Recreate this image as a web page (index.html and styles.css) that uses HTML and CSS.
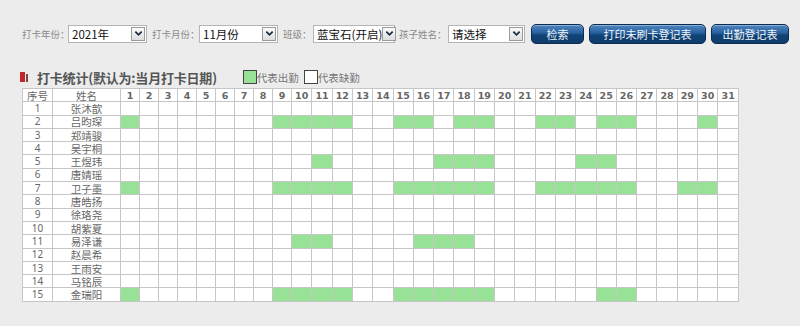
FILE: index.html
```html
<!DOCTYPE html>
<html lang="zh-CN">
<head>
<meta charset="utf-8">
<title>打卡统计</title>
<link rel="stylesheet" href="styles.css">
</head>
<body>
<div class="toolbar">
  <span class="lbl lbl-a">打卡年份：</span>
  <div class="sel sel-a"><span class="sel-text">2021年</span><span class="arrow"><svg viewBox="0 0 10 10" width="9" height="9"><path d="M1.5 3 L5 6.5 L8.5 3" fill="none" stroke="#1a2a44" stroke-width="2"/></svg></span></div>
  <span class="lbl lbl-b">打卡月份：</span>
  <div class="sel sel-a"><span class="sel-text">11月份</span><span class="arrow"><svg viewBox="0 0 10 10" width="9" height="9"><path d="M1.5 3 L5 6.5 L8.5 3" fill="none" stroke="#1a2a44" stroke-width="2"/></svg></span></div>
  <span class="lbl lbl-c">班级：</span>
  <div class="sel sel-c"><span class="sel-text">蓝宝石(开启)</span><span class="arrow"><svg viewBox="0 0 10 10" width="9" height="9"><path d="M1.5 3 L5 6.5 L8.5 3" fill="none" stroke="#1a2a44" stroke-width="2"/></svg></span></div>
  <span class="lbl lbl-d">孩子姓名：</span>
  <div class="sel sel-d"><span class="sel-text">请选择</span><span class="arrow"><svg viewBox="0 0 10 10" width="9" height="9"><path d="M1.5 3 L5 6.5 L8.5 3" fill="none" stroke="#1a2a44" stroke-width="2"/></svg></span></div>
  <button class="btn btn-a">检索</button>
  <button class="btn btn-b">打印未刷卡登记表</button>
  <button class="btn btn-c">出勤登记表</button>
</div>

<div class="title-row">
  <span class="mark"><i class="mark-a"></i><i class="mark-b"></i></span>
  <span class="title">打卡统计(默认为:当月打卡日期)</span>
  <span class="legend"><i class="box box-on"></i>代表出勤<i class="box box-off"></i>代表缺勤</span>
</div>

<table class="grid">
  <colgroup>
    <col class="c-no"><col class="c-name">
    <col class="c-s"><col class="c-s"><col class="c-s"><col class="c-s"><col class="c-s"><col class="c-s"><col class="c-s"><col class="c-s"><col class="c-s">
    <col class="c-d"><col class="c-d"><col class="c-d"><col class="c-d"><col class="c-d"><col class="c-d"><col class="c-d"><col class="c-d"><col class="c-d"><col class="c-d"><col class="c-d"><col class="c-d"><col class="c-d"><col class="c-d"><col class="c-d"><col class="c-d"><col class="c-d"><col class="c-d"><col class="c-d"><col class="c-d"><col class="c-d"><col class="c-d">
  </colgroup>
  <thead>
    <tr><th class="h-cn">序号</th><th class="h-cn">姓名</th><th>1</th><th>2</th><th>3</th><th>4</th><th>5</th><th>6</th><th>7</th><th>8</th><th>9</th><th>10</th><th>11</th><th>12</th><th>13</th><th>14</th><th>15</th><th>16</th><th>17</th><th>18</th><th>19</th><th>20</th><th>21</th><th>22</th><th>23</th><th>24</th><th>25</th><th>26</th><th>27</th><th>28</th><th>29</th><th>30</th><th>31</th></tr>
  </thead>
  <tbody>
    <tr><td class="no">1</td><td class="nm">张沐歆</td><td></td><td></td><td></td><td></td><td></td><td></td><td></td><td></td><td></td><td></td><td></td><td></td><td></td><td></td><td></td><td></td><td></td><td></td><td></td><td></td><td></td><td></td><td></td><td></td><td></td><td></td><td></td><td></td><td></td><td></td><td></td></tr>
    <tr><td class="no">2</td><td class="nm">吕昀琛</td><td class="g"></td><td></td><td></td><td></td><td></td><td></td><td></td><td></td><td class="g"></td><td class="g"></td><td class="g"></td><td class="g"></td><td></td><td></td><td class="g"></td><td class="g"></td><td></td><td class="g"></td><td class="g"></td><td></td><td></td><td class="g"></td><td class="g"></td><td></td><td class="g"></td><td class="g"></td><td></td><td></td><td></td><td class="g"></td><td></td></tr>
    <tr><td class="no">3</td><td class="nm">郑靖骏</td><td></td><td></td><td></td><td></td><td></td><td></td><td></td><td></td><td></td><td></td><td></td><td></td><td></td><td></td><td></td><td></td><td></td><td></td><td></td><td></td><td></td><td></td><td></td><td></td><td></td><td></td><td></td><td></td><td></td><td></td><td></td></tr>
    <tr><td class="no">4</td><td class="nm">吴宇桐</td><td></td><td></td><td></td><td></td><td></td><td></td><td></td><td></td><td></td><td></td><td></td><td></td><td></td><td></td><td></td><td></td><td></td><td></td><td></td><td></td><td></td><td></td><td></td><td></td><td></td><td></td><td></td><td></td><td></td><td></td><td></td></tr>
    <tr><td class="no">5</td><td class="nm">王煜玮</td><td></td><td></td><td></td><td></td><td></td><td></td><td></td><td></td><td></td><td></td><td class="g"></td><td></td><td></td><td></td><td></td><td></td><td class="g"></td><td class="g"></td><td class="g"></td><td></td><td></td><td></td><td></td><td class="g"></td><td class="g"></td><td></td><td></td><td></td><td></td><td></td><td></td></tr>
    <tr><td class="no">6</td><td class="nm">唐婧瑶</td><td></td><td></td><td></td><td></td><td></td><td></td><td></td><td></td><td></td><td></td><td></td><td></td><td></td><td></td><td></td><td></td><td></td><td></td><td></td><td></td><td></td><td></td><td></td><td></td><td></td><td></td><td></td><td></td><td></td><td></td><td></td></tr>
    <tr><td class="no">7</td><td class="nm">卫子墨</td><td class="g"></td><td></td><td></td><td></td><td></td><td></td><td></td><td></td><td class="g"></td><td class="g"></td><td class="g"></td><td class="g"></td><td></td><td></td><td class="g"></td><td class="g"></td><td class="g"></td><td class="g"></td><td class="g"></td><td></td><td></td><td class="g"></td><td class="g"></td><td class="g"></td><td class="g"></td><td class="g"></td><td></td><td></td><td class="g"></td><td class="g"></td><td></td></tr>
    <tr><td class="no">8</td><td class="nm">唐皓扬</td><td></td><td></td><td></td><td></td><td></td><td></td><td></td><td></td><td></td><td></td><td></td><td></td><td></td><td></td><td></td><td></td><td></td><td></td><td></td><td></td><td></td><td></td><td></td><td></td><td></td><td></td><td></td><td></td><td></td><td></td><td></td></tr>
    <tr><td class="no">9</td><td class="nm">徐珞尧</td><td></td><td></td><td></td><td></td><td></td><td></td><td></td><td></td><td></td><td></td><td></td><td></td><td></td><td></td><td></td><td></td><td></td><td></td><td></td><td></td><td></td><td></td><td></td><td></td><td></td><td></td><td></td><td></td><td></td><td></td><td></td></tr>
    <tr><td class="no">10</td><td class="nm">胡紫夏</td><td></td><td></td><td></td><td></td><td></td><td></td><td></td><td></td><td></td><td></td><td></td><td></td><td></td><td></td><td></td><td></td><td></td><td></td><td></td><td></td><td></td><td></td><td></td><td></td><td></td><td></td><td></td><td></td><td></td><td></td><td></td></tr>
    <tr><td class="no">11</td><td class="nm">易泽谦</td><td></td><td></td><td></td><td></td><td></td><td></td><td></td><td></td><td></td><td class="g"></td><td class="g"></td><td></td><td></td><td></td><td></td><td class="g"></td><td class="g"></td><td class="g"></td><td></td><td></td><td></td><td></td><td></td><td></td><td></td><td></td><td></td><td></td><td></td><td></td><td></td></tr>
    <tr><td class="no">12</td><td class="nm">赵晨希</td><td></td><td></td><td></td><td></td><td></td><td></td><td></td><td></td><td></td><td></td><td></td><td></td><td></td><td></td><td></td><td></td><td></td><td></td><td></td><td></td><td></td><td></td><td></td><td></td><td></td><td></td><td></td><td></td><td></td><td></td><td></td></tr>
    <tr><td class="no">13</td><td class="nm">王雨安</td><td></td><td></td><td></td><td></td><td></td><td></td><td></td><td></td><td></td><td></td><td></td><td></td><td></td><td></td><td></td><td></td><td></td><td></td><td></td><td></td><td></td><td></td><td></td><td></td><td></td><td></td><td></td><td></td><td></td><td></td><td></td></tr>
    <tr><td class="no">14</td><td class="nm">马铭辰</td><td></td><td></td><td></td><td></td><td></td><td></td><td></td><td></td><td></td><td></td><td></td><td></td><td></td><td></td><td></td><td></td><td></td><td></td><td></td><td></td><td></td><td></td><td></td><td></td><td></td><td></td><td></td><td></td><td></td><td></td><td></td></tr>
    <tr><td class="no">15</td><td class="nm">金瑞阳</td><td class="g"></td><td></td><td></td><td></td><td></td><td></td><td></td><td></td><td class="g"></td><td class="g"></td><td class="g"></td><td class="g"></td><td></td><td></td><td class="g"></td><td class="g"></td><td class="g"></td><td class="g"></td><td class="g"></td><td></td><td></td><td></td><td></td><td></td><td class="g"></td><td class="g"></td><td></td><td></td><td></td><td></td><td></td></tr>
  </tbody>
</table>
</body>
</html>
```

FILE: styles.css
```css
html, body {
  margin: 0;
  padding: 0;
}

body {
  background: #ececec;
  font-family: "Noto Sans CJK SC", "Noto Sans", sans-serif;
  color: #555;
}

.toolbar {
  display: flex;
  align-items: center;
  height: 19px;
  padding: 24px 0 0 22px;
}

.lbl {
  font-size: 9.5px;
  color: #8a8a8a;
  white-space: nowrap;
  flex: none;
}

.lbl-a { width: 46px; }
.lbl-b { width: 47px; margin-left: 5px; }
.lbl-c { width: 30px; margin-left: 5px; }
.lbl-d { width: 49px; margin-left: 4px; }

.sel {
  display: flex;
  align-items: center;
  justify-content: space-between;
  box-sizing: border-box;
  height: 18px;
  background: #fff;
  border: 1px solid #b4b4b4;
  padding: 0 1px 0 3px;
  flex: none;
}

.sel-a { width: 79px; }
.sel-c { width: 82px; }
.sel-d { width: 77px; }

.sel-text {
  font-size: 11.5px;
  color: #111;
  line-height: 16px;
  white-space: nowrap;
}

.arrow {
  display: flex;
  align-items: center;
  justify-content: center;
  box-sizing: border-box;
  width: 14px;
  height: 14px;
  border: 1px solid #9a9a9a;
  background: linear-gradient(#fafafa, #dedede);
  flex: none;
}

.btn {
  box-sizing: border-box;
  height: 20px;
  margin-left: 5px;
  padding: 0;
  border: 1px solid #0b2c52;
  border-radius: 5px;
  background: linear-gradient(#4f86c0 0%, #26609e 45%, #114477 55%, #0f3c6b 100%);
  box-shadow: inset 0 1px 0 rgba(255,255,255,0.35);
  color: #f2f6fb;
  font-family: "Noto Sans CJK SC", sans-serif;
  font-size: 11px;
  line-height: 18px;
  flex: none;
}

.btn-a { width: 53px; margin-left: 6px; }
.btn-b { width: 117px; }
.btn-c { width: 78px; }

.title-row {
  display: flex;
  align-items: center;
  height: 18px;
  margin-top: 25px;
  padding-left: 20px;
}

.mark {
  display: flex;
  align-items: flex-end;
  gap: 1px;
  height: 10px;
  width: 17px;
  flex: none;
}

.mark-a {
  display: block;
  width: 5px;
  height: 10px;
  background: #c0282a;
}

.mark-b {
  display: block;
  width: 2px;
  height: 8px;
  background: #7a4a4a;
}

.title {
  font-size: 13px;
  font-weight: bold;
  color: #555;
  white-space: nowrap;
  letter-spacing: -0.2px;
}

.legend {
  display: flex;
  align-items: center;
  margin-left: 26px;
  font-size: 10.5px;
  color: #777;
  white-space: nowrap;
}

.box {
  display: block;
  box-sizing: border-box;
  width: 14px;
  height: 14px;
  border: 1px solid #444;
  flex: none;
}

.box-on { background: #98e298; }
.box-off { background: #fff; margin-left: 5px; }

.grid {
  margin: 2px 0 0 22px;
  width: 717px;
  table-layout: fixed;
  border-collapse: collapse;
  background: #fff;
  border: 1px solid #d6d6d6;
}

.c-no { width: 30px; }
.c-name { width: 68px; }
.c-s { width: 19px; }
.c-d { width: 20.3px; }

.grid th,
.grid td {
  height: 12.3px;
  padding: 0;
  border: 1px solid #c6c6c6;
  text-align: center;
  vertical-align: middle;
  line-height: 11px;
  overflow: hidden;
  white-space: nowrap;
}

.grid th {
  font-family: "DejaVu Sans", Verdana, sans-serif;
  font-size: 9.5px;
  font-weight: bold;
  color: #666;
}

.grid th.h-cn {
  font-family: "Noto Sans CJK SC", sans-serif;
  font-size: 10.5px;
  font-weight: normal;
  color: #666;
}

.grid td.no {
  font-family: "Noto Sans", sans-serif;
  font-size: 10px;
  color: #666;
}

.grid td.nm {
  font-size: 10.5px;
  color: #666;
}

.grid td.g {
  background: #98e298;
}
```
